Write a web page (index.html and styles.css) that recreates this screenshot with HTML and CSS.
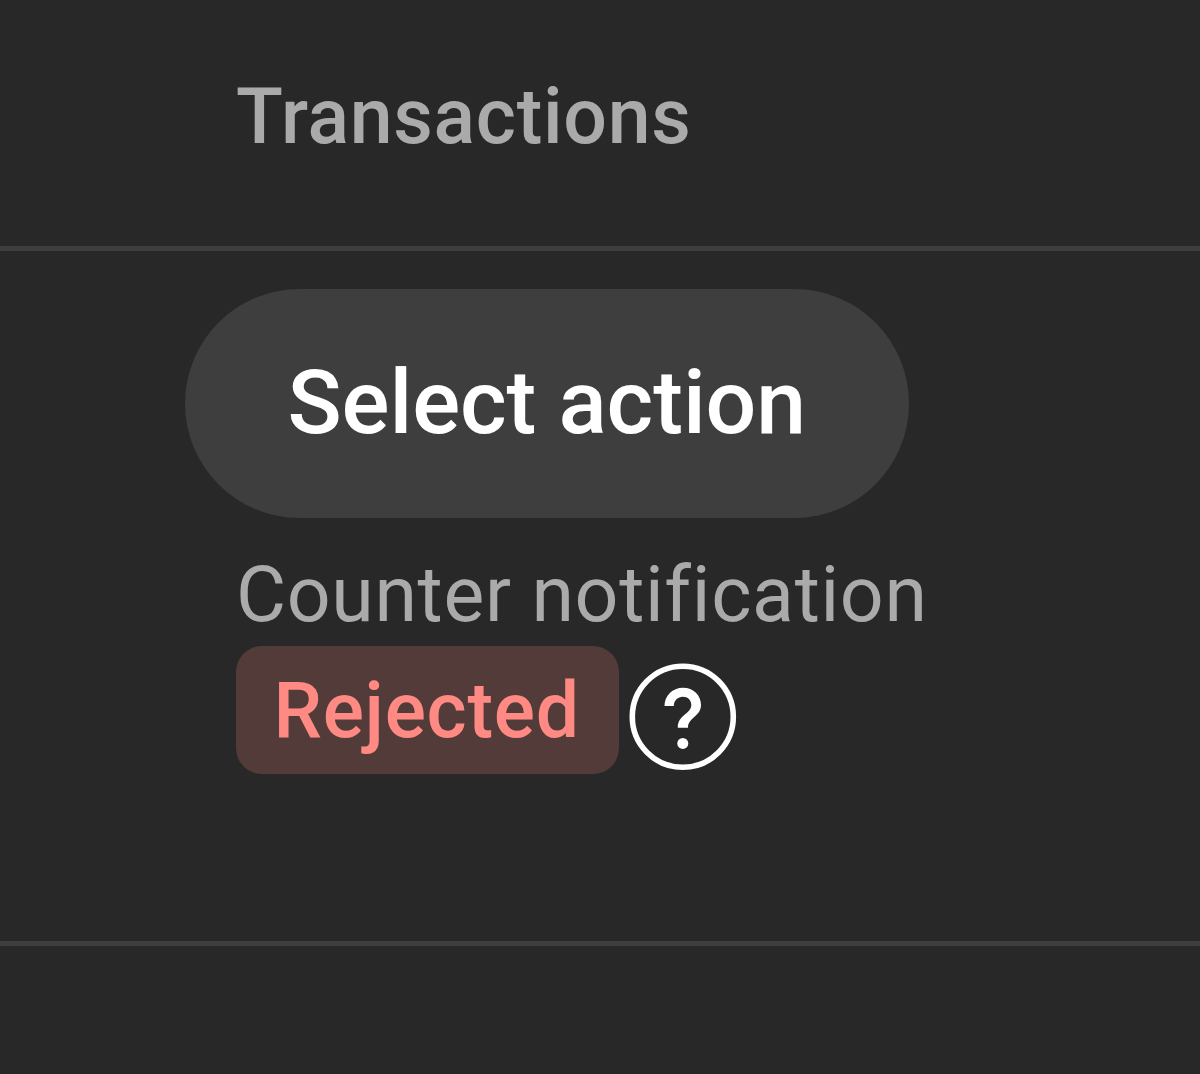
FILE: index.html
```
<!DOCTYPE html>
<html lang="en">
<head>
    <meta charset="UTF-8">
    <meta name="viewport" content="width=device-width, initial-scale=1.0">
    <title>Transactions</title>
    <link rel="stylesheet" href="styles.css">
</head>
<body>
    <div class="table">
        <div class="table-header">
            <span class="column-title">Transactions</span>
        </div>
        <div class="table-row">
            <button class="action-btn" type="button">Select action</button>
            <div class="label">Counter notification</div>
            <div class="status">
                <span class="badge">Rejected</span>
                <svg class="help-icon" viewBox="0 0 108 108" aria-label="Help">
                    <circle cx="53.8" cy="53.8" r="50.5" fill="none" stroke="#fff" stroke-width="5.6"/>
                    <path d="M35.5 43C35.5 32.5 43.5 24.7 54 24.7C64.5 24.7 72 32.3 72 42C72 53.5 59 54.5 59 64.7H48.8C48.8 51.5 62.3 51 62.3 42C62.3 37.2 58.8 33.7 54 33.7C48.8 33.7 44.8 37.5 44.8 43Z" fill="#fff"/>
                    <circle cx="53.8" cy="80.4" r="5.5" fill="#fff"/>
                </svg>
            </div>
        </div>
    </div>
</body>
</html>
```
FILE: styles.css
```
body {
    font-family: Roboto, sans-serif;
    margin: 0;
    min-height: 1074px;
    background-color: #282828;
    color: #aaa;
    font-size: 77px;
    line-height: 102px;
}

.table-header {
    box-sizing: border-box;
    height: 251px;
    padding: 66px 0 0 236px;
    border-bottom: 5px solid #3e3e3e;
}

.column-title {
    font-weight: 540;
    letter-spacing: 0.7px;
}

.table-row {
    box-sizing: border-box;
    height: 695px;
    padding: 37.5px 0 0 236px;
    border-bottom: 5px solid #3e3e3e;
}

.action-btn {
    display: block;
    width: 723.5px;
    height: 229.5px;
    margin: 0 0 26px -51px;
    padding: 0 0 1px;
    border: none;
    border-radius: 115px;
    background-color: #3e3e3e;
    color: #fff;
    font-family: inherit;
    font-size: 89.5px;
    font-weight: 540;
    letter-spacing: -0.1px;
    cursor: pointer;
}

.label {
    letter-spacing: 0.65px;
    white-space: nowrap;
}

.status {
    display: flex;
    align-items: flex-start;
    gap: 10px;
}

.badge {
    box-sizing: border-box;
    width: 383px;
    height: 127.5px;
    padding: 14px 0 0 37.5px;
    border-radius: 26px;
    background-color: #533b39;
    color: #ff8983;
    font-weight: 540;
    letter-spacing: 0.7px;
}

.help-icon {
    width: 108px;
    height: 108px;
    margin-top: 17px;
}
```
